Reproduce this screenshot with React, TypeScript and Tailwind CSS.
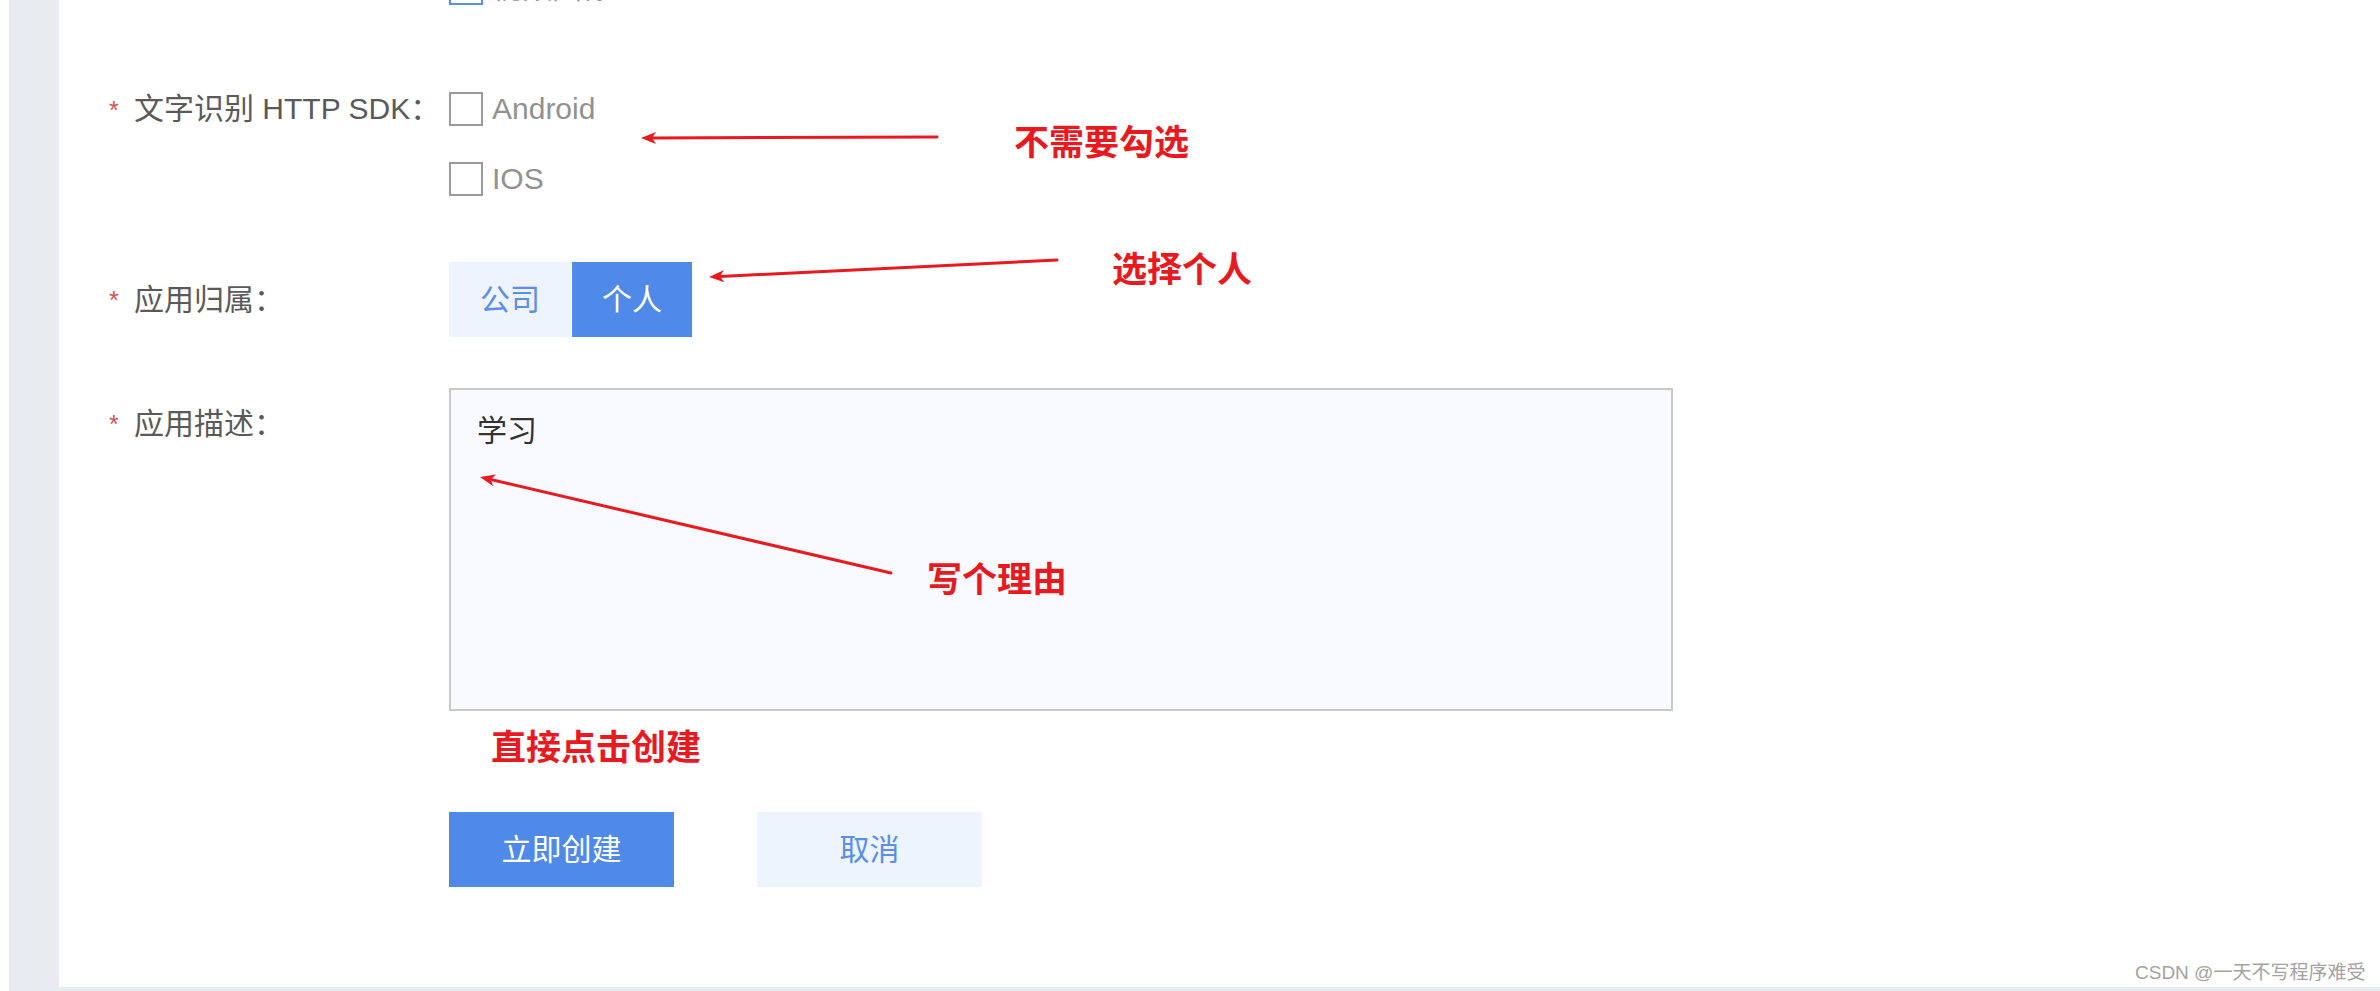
import React from "react";

const font = { fontFamily: '"Liberation Sans", "Noto Sans CJK SC", sans-serif' };

function Label({ text }: { text: string }) {
  return (
    <div className="w-[390px] shrink-0 flex items-center pl-[50px] text-[30px] leading-[40px] text-[#5a5a5a] whitespace-nowrap">
      <span className="w-[25px] text-[25px] text-[#d9534f] self-start mt-[1px]">*</span>
      <span>{text}</span>
    </div>
  );
}

function Checkbox({ label, checked }: { label: string; checked?: boolean }) {
  return (
    <div className="flex items-center h-[34px] gap-[9px]">
      <div
        className={
          checked
            ? "w-[34px] h-[34px] border-2 border-[#5b8ee8] bg-white"
            : "w-[34px] h-[34px] border-2 border-[#9a9a9a] bg-white"
        }
      />
      <span className="text-[30px] leading-[34px] text-[#919191]">{label}</span>
    </div>
  );
}

function Annotations() {
  return (
    <div className="absolute inset-0 pointer-events-none">
      <svg className="absolute inset-0" width="2380" height="991" viewBox="0 0 2380 991">
        <g stroke="#e8191f" strokeWidth="3" fill="none" strokeLinecap="round">
          <line x1="937" y1="137" x2="652" y2="138" />
          <line x1="1057" y1="260" x2="720" y2="276.5" />
          <line x1="891" y1="573" x2="490.7" y2="479.5" />
        </g>
        <g fill="#e8191f">
          <polygon points="641,138 656,132 652,138 656,144" />
          <polygon points="709,277 723.7,270.3 720,276.5 724.3,282.3" />
          <polygon points="480,477 496,474.6 490.7,479.5 493.2,486.2" />
        </g>
      </svg>
      <div className="absolute left-[1014px] top-[125px] text-[35px] leading-[36px] font-bold text-[#e8191f]">
        不需要勾选
      </div>
      <div className="absolute left-[1112px] top-[252px] text-[35px] leading-[36px] font-bold text-[#e8191f]">
        选择个人
      </div>
      <div className="absolute left-[927px] top-[562px] text-[35px] leading-[36px] font-bold text-[#e8191f]">
        写个理由
      </div>
      <div className="absolute left-[491px] top-[730px] text-[35px] leading-[36px] font-bold text-[#e8191f]">
        直接点击创建
      </div>
      <div className="absolute left-[2135px] top-[961px] text-[19px] leading-[24px] text-[#a3a3a3]">
        CSDN @一天不写程序难受
      </div>
    </div>
  );
}

export default function App() {
  return (
    <div className="relative w-[2380px] h-[991px] overflow-hidden bg-white pl-[9px]" style={font}>
      <div className="h-full bg-[#e8ebf0] pl-[50px] pb-[4px]">
        <div className="h-full bg-white flex flex-col">
          {/* row cut off at the top */}
          <div className="flex -mt-[29px]">
            <div className="w-[390px] shrink-0" />
            <Checkbox label="视频图像" checked />
          </div>

          <div className="flex mt-[87px]">
            <div className="h-[34px] flex items-center shrink-0">
              <Label text="文字识别 HTTP SDK：" />
            </div>
            <div className="flex flex-col gap-[36px]">
              <Checkbox label="Android" />
              <Checkbox label="IOS" />
            </div>
          </div>

          <div className="flex mt-[66px] h-[75px] items-center">
            <Label text="应用归属：" />
            <div className="flex gap-[1px] h-full">
              <button className="w-[122px] h-full bg-[#edf4fe] text-[#5b8ee8] text-[30px]">公司</button>
              <button className="w-[120px] h-full bg-[#508ae9] text-white text-[30px]">个人</button>
            </div>
          </div>

          <div className="flex mt-[51px]">
            <div className="pt-[15px] shrink-0">
              <Label text="应用描述：" />
            </div>
            <div className="w-[1224px] h-[323px] border-2 border-[#c9c9c9] bg-[#f8faff] pl-[26px] pt-[21px] text-[30px] leading-[40px] text-[#333]">
              学习
            </div>
          </div>

          <div className="flex mt-[101px]">
            <div className="w-[390px] shrink-0" />
            <div className="flex gap-[83px]">
              <button className="w-[225px] h-[75px] bg-[#508ae9] text-white text-[30px]">立即创建</button>
              <button className="w-[225px] h-[75px] bg-[#edf4fe] text-[#5b8ee8] text-[30px]">取消</button>
            </div>
          </div>
        </div>
      </div>
      <Annotations />
    </div>
  );
}
